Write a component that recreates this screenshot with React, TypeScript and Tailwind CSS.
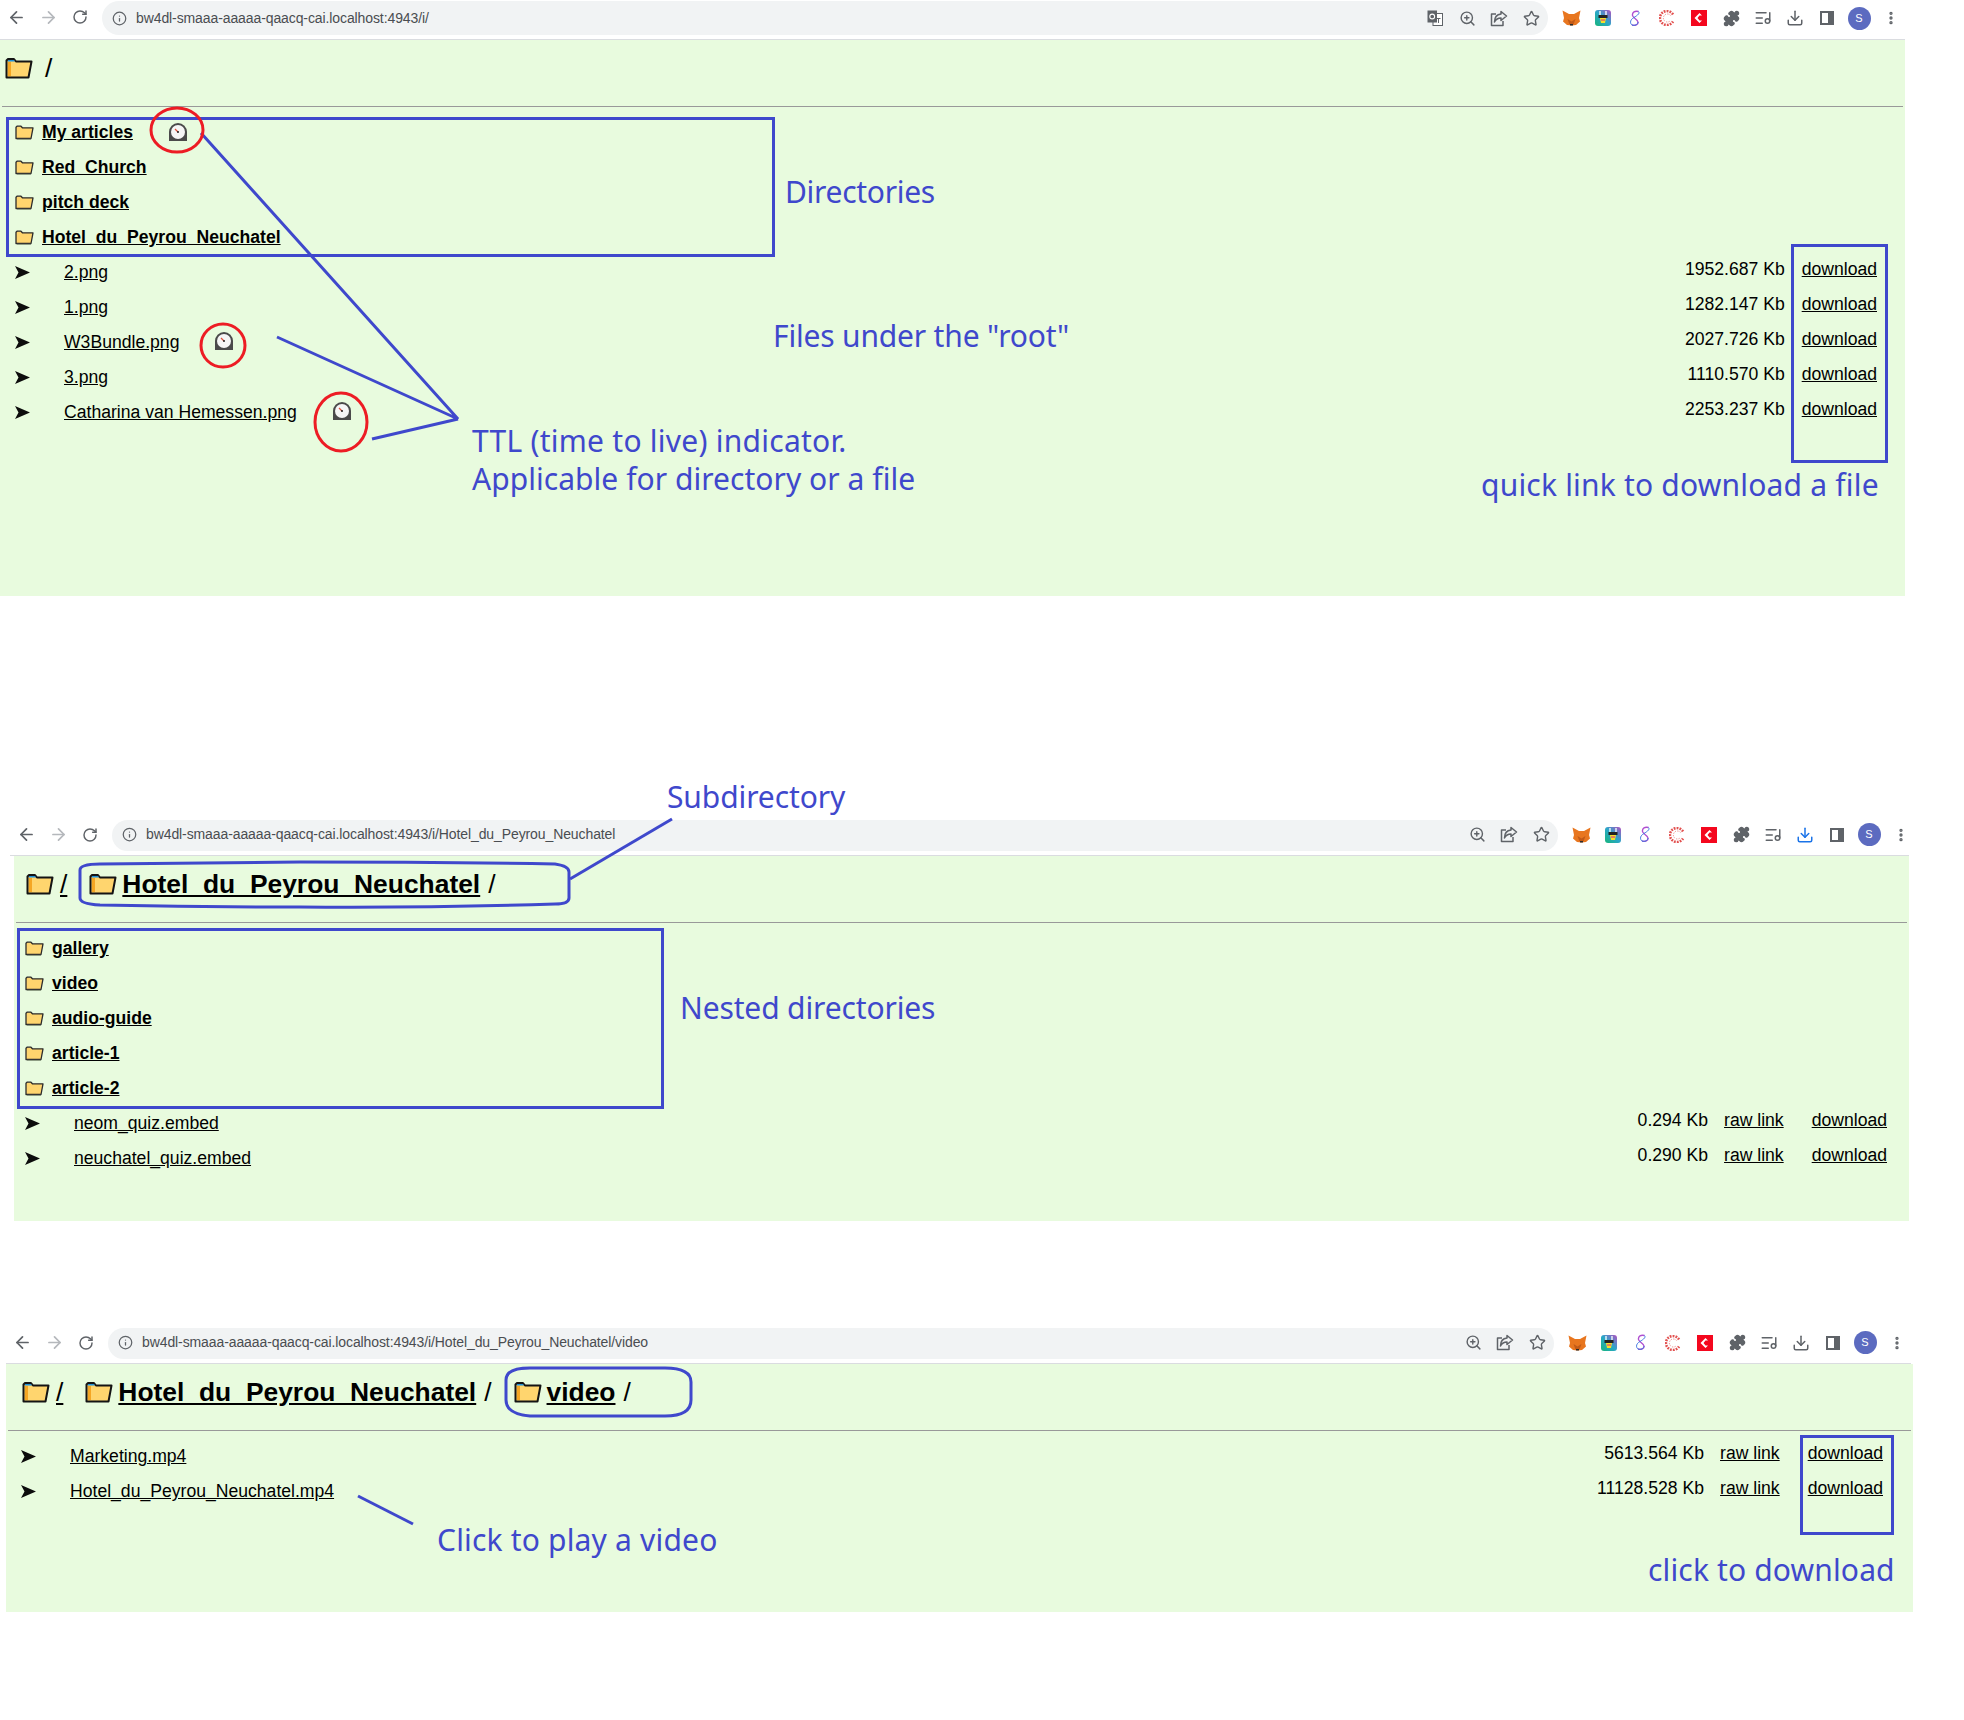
import React from "react";
import { ArrowLeft, ArrowRight, RotateCw, Info, ZoomIn, Star, Puzzle, ListMusic, Download, MoreVertical } from "lucide-react";

const rootFiles = [
  { name: "2.png", size: "1952.687 Kb" },
  { name: "1.png", size: "1282.147 Kb" },
  { name: "W3Bundle.png", size: "2027.726 Kb", ttl: true },
  { name: "3.png", size: "1110.570 Kb" },
  { name: "Catharina van Hemessen.png", size: "2253.237 Kb", ttl: true },
];
const rootDirs = [{ name: "My articles", ttl: true }, { name: "Red_Church" }, { name: "pitch deck" }, { name: "Hotel_du_Peyrou_Neuchatel" }];
const nestedDirs = [{ name: "gallery" }, { name: "video" }, { name: "audio-guide" }, { name: "article-1" }, { name: "article-2" }];

function FolderBig() {
  return (
    <svg width="28" height="22" viewBox="0 0 28 22" className="shrink-0">
      <path d="M1.5 20.5V3.5L3 2h6l2 2.5h15.5L23.5 20.5Z" fill="#ffd56e" stroke="#141414" strokeWidth="2" strokeLinejoin="round" />
      <path d="M3 3h6l1 1.5H3Z" fill="#1f8fd6" />
      <path d="M3 5h3v14H3Z" fill="#f5a623" />
    </svg>
  );
}

function FolderSmall() {
  return (
    <svg width="19" height="15" viewBox="0 0 19 15" className="shrink-0">
      <path d="M1 13.5V2.2L2 1.2h4l1.4 1.6H18L16 13.5Z" fill="#ffd56e" stroke="#2b2b2b" strokeWidth="1.3" strokeLinejoin="round" />
      <path d="M2 14.4h14" stroke="#8a9a80" strokeWidth="1" />
    </svg>
  );
}

function TimerIcon() {
  return (
    <svg width="20" height="20" viewBox="0 0 20 20" className="mb-[2px] shrink-0">
      <path d="M1 19V10a9 9 0 0 1 18 0v9Z" fill="#4a4a4a" />
      <circle cx="10" cy="10" r="7" fill="#f6f6f6" />
      <path d="M7 7l3 3" stroke="#e0503c" strokeWidth="1.2" />
      <circle cx="10" cy="10" r="1" fill="#222" />
    </svg>
  );
}

function Arrow() {
  return (
    <svg width="15" height="13" viewBox="0 0 15 13" className="ml-px shrink-0">
      <path d="M0 0L15 6.5L0 13L3.5 6.5Z" fill="#0c0c0c" />
    </svg>
  );
}

function ShareIcon() {
  return (
    <svg width="18" height="17" viewBox="0 0 18 17" fill="none" stroke="#5f6368" strokeWidth="1.500" strokeLinejoin="round">
      <path d="M6 4H1.500V15.500H13V11" />
      <path d="M11 1.500L16.500 6L11 10.500V8C8 8 6 9 4.500 12C4.500 8 6.500 4.500 11 4Z" />
    </svg>
  );
}

function TranslateIcon() {
  return (
    <svg width="16" height="16" viewBox="0 0 16 16">
      <rect x="6" y="3.500" width="9.500" height="12" fill="#fff" stroke="#5f6368" />
      <rect x="0.500" y="0.500" width="9.500" height="12" fill="#5f6368" />
      <circle cx="5.200" cy="6.500" r="2.400" fill="none" stroke="#fff" strokeWidth="1.100" />
      <path d="M9.500 8.500h4M11.500 8v5" stroke="#5f6368" />
    </svg>
  );
}

function ExtIcons({ blueDownload }: { blueDownload?: boolean }) {
  return (
    <>
      <span className="flex w-8 justify-center">
        <svg width="19" height="16" viewBox="0 0 19 16">
          <path d="M0.500 0.500L7 4h5l6.500-3.500L17 8l1 3.500-4 3.500-4.500 .5-4.500-.5-4-3.500L2 8Z" fill="#e8761f" />
          <path d="M5.500 9l4 2.500L13.500 9l-1.800 5h-4.400Z" fill="#c25a17" />
          <path d="M8 14h3v1.500H8Z" fill="#2c2c2c" />
        </svg>
      </span>
      <span className="flex w-8 justify-center">
        <svg width="16" height="16" viewBox="0 0 16 16">
          <defs>
            <linearGradient id="plug" x1="0" y1="1" x2="1" y2="0">
              <stop offset="0" stopColor="#17b57a" />
              <stop offset="0.5" stopColor="#2aa7c9" />
              <stop offset="1" stopColor="#b24fc0" />
            </linearGradient>
          </defs>
          <rect width="16" height="16" rx="3" fill="url(#plug)" />
          <path d="M5 1v4M11 1v4" stroke="#fff" strokeWidth="1.300" />
          <path d="M3.500 5h9v3h-9Z" fill="#222" />
          <path d="M5 8h6l-1 5H6Z" fill="#f4e02a" />
          <path d="M6 10h4" stroke="#e0407a" strokeWidth="1.200" />
        </svg>
      </span>
      <span className="flex w-8 justify-center">
        <svg width="14" height="17" viewBox="0 0 14 17" fill="none">
          <path d="M10.500 1.500C7 .5 4 2 4.500 5.500c.4 2.500 5 3.500 5.500 6.500.4 2.500-3 4-6 3" stroke="#b04fd0" strokeWidth="1.400" />
          <path d="M10.500 1.500C12.500 4 8 6 4.500 8.500 2 10.500 2 13.500 4 15c3 1 6-.5 6-3" stroke="#3f78e0" strokeWidth="1" />
        </svg>
      </span>
      <span className="flex w-8 justify-center">
        <svg width="16" height="16" viewBox="0 0 16 16" fill="none">
          <path d="M14 4.500A7 7 0 1 0 14 11.500" stroke="#e2504f" strokeWidth="2.600" strokeDasharray="1.800 1.100" />
          <path d="M11.500 5.500A4 4 0 1 0 11.500 10.500" stroke="#ee8a88" strokeWidth="1" strokeDasharray="1.200 1.200" />
        </svg>
      </span>
      <span className="flex w-8 justify-center">
        <svg width="16" height="16" viewBox="0 0 16 16">
          <rect width="16" height="16" fill="#f4071e" />
          <path d="M8.500 3L3.500 8l5 5 2.500-2.500H8.500L6.500 8l2-2.500H11Z" fill="#fff" />
        </svg>
      </span>
      <span className="flex w-8 justify-center">
        <Puzzle size={17} className="fill-[#5f6368] text-[#5f6368]" />
      </span>
      <span className="flex w-8 justify-center">
        <ListMusic size={18} className="text-[#5f6368]" />
      </span>
      <span className="flex w-8 justify-center">
        <Download size={18} className={blueDownload ? "text-[#1a73e8]" : "text-[#5f6368]"} />
      </span>
      <span className="flex w-8 justify-center">
        <span className="flex h-[14px] w-[14px] justify-end border-2 border-[#5f6368]">
          <span className="h-full w-[4px] bg-[#5f6368]" />
        </span>
      </span>
      <span className="flex w-8 justify-center">
        <span className="flex h-[23px] w-[23px] items-center justify-center rounded-full bg-[#5c6bc0] text-[11px] text-white">S</span>
      </span>
      <span className="flex w-8 justify-center">
        <MoreVertical size={16} strokeWidth={3} className="text-[#5f6368]" />
      </span>
    </>
  );
}

function BrowserBar({ url, tall, translate, blueDownload, offset }: { url: string; tall?: boolean; translate?: boolean; blueDownload?: boolean; offset: string }) {
  const icon = "flex w-8 justify-center text-[#5f6368]";
  return (
    <div className={`flex border-b border-[#dadce0] bg-white pb-1 ${offset}`}>
      <div className={`flex w-[102px] shrink-0 items-center ${tall ? "h-[34px]" : "h-[29px]"}`}>
        <span className={icon}><ArrowLeft size={19} strokeWidth={2.2} /></span>
        <span className="flex w-8 justify-center text-[#b5b8bc]"><ArrowRight size={19} strokeWidth={2.2} /></span>
        <span className={icon}><RotateCw size={16} strokeWidth={2.2} /></span>
      </div>
      <div className={`flex w-[1446px] shrink-0 items-center rounded-full bg-[#f1f3f4] pl-[10px] pr-px text-[#5f6368] ${tall ? "mt-px h-[34px]" : "h-[31px] pb-[2px]"}`}>
        <Info size={15} className="shrink-0" />
        <span className="ml-[9px] flex-1 text-[14px] tracking-[-0.1px] text-[#4a4d51]">{url}</span>
        {translate && <span className={icon}><TranslateIcon /></span>}
        <span className={icon}><ZoomIn size={17} /></span>
        <span className={icon}><ShareIcon /></span>
        <span className={icon}><Star size={17} /></span>
      </div>
      <div className={`ml-[7px] flex items-center ${tall ? "mt-px h-[34px]" : "h-[29px]"}`}>
        <ExtIcons blueDownload={blueDownload} />
      </div>
    </div>
  );
}

function Crumb({ name, slashLink }: { name?: string; slashLink?: boolean }) {
  return (
    <div className="flex items-center">
      <FolderBig />
      {name ? (
        <>
          <a className="ml-[5px] font-bold underline">{name}</a>
          <span className="ml-[8px]">/</span>
        </>
      ) : (
        <span className={slashLink ? "ml-[6px] underline" : "ml-[12px]"}>/</span>
      )}
    </div>
  );
}

function DirRow({ name, ttl, pad }: { name: string; ttl?: boolean; pad: string }) {
  return (
    <div className={`flex h-[35px] items-center ${pad}`}>
      <span className="flex w-[28px] shrink-0 pl-px"><FolderSmall /></span>
      <a className="font-bold underline">{name}</a>
      {ttl && <span className="ml-[35px]"><TimerIcon /></span>}
    </div>
  );
}

function FileRow({ name, size, ttl, raw, pad, right }: { name: string; size: string; ttl?: boolean; raw?: boolean; pad: string; right: string }) {
  return (
    <div className={`flex h-[35px] items-center justify-between ${pad} ${right}`}>
      <div className="flex items-center">
        <span className="flex w-[50px] shrink-0"><Arrow /></span>
        <a className="underline">{name}</a>
        {ttl && <span className="ml-[35px]"><TimerIcon /></span>}
      </div>
      <div className="flex pb-[7px]">
        <span>{size}</span>
        {raw && <a className="ml-[16px] underline">raw link</a>}
        <a className={raw ? "ml-[28px] underline" : "ml-[17px] underline"}>download</a>
      </div>
    </div>
  );
}

function Green({ className, titlePad, crumbs, children }: { className: string; titlePad: string; crumbs: React.ReactNode; children: React.ReactNode }) {
  return (
    <div className={`bg-[#e8fbde] text-[17.6px] text-black ${className}`}>
      <div className={`flex h-[66px] items-start gap-[22px] pt-[17px] text-[26.4px] leading-[22px] ${titlePad}`}>{crumbs}</div>
      <div className="mx-[2px] h-px bg-[#999999]" />
      <div className="pt-2">{children}</div>
    </div>
  );
}

function Label({ className, children }: { className: string; children: React.ReactNode }) {
  return <div className={`absolute -translate-y-1/2 whitespace-nowrap text-[30px] leading-none text-[#3f48cc] ${className}`} style={{ fontFamily: '"Noto Sans", sans-serif' }}>{children}</div>;
}

export default function App() {
  return (
    <div className="relative h-[1720px] w-[1964px] overflow-hidden bg-white" style={{ fontFamily: '"Liberation Sans", Arial, sans-serif' }}>
      {/* top window */}
      <BrowserBar url="bw4dl-smaaa-aaaaa-qaacq-cai.localhost:4943/i/" tall translate offset="w-[1905px]" />
      <Green className="h-[556px] w-[1905px]" titlePad="pl-[5px]" crumbs={<Crumb />}>
        {rootDirs.map((d) => <DirRow key={d.name} name={d.name} ttl={d.ttl} pad="pl-[14px]" />)}
        {rootFiles.map((f) => <FileRow key={f.name} {...f} pad="pl-[14px]" right="pr-[28px]" />)}
      </Green>

      {/* subdirectory window */}
      <div className="mt-[224px]">
        <BrowserBar url="bw4dl-smaaa-aaaaa-qaacq-cai.localhost:4943/i/Hotel_du_Peyrou_Neuchatel" blueDownload offset="ml-[10px] w-[1899px]" />
        <Green className="ml-[14px] h-[365px] w-[1895px]" titlePad="pl-[12px]" crumbs={<><Crumb slashLink /><Crumb name="Hotel_du_Peyrou_Neuchatel" /></>}>
          {nestedDirs.map((d) => <DirRow key={d.name} name={d.name} pad="pl-[10px]" />)}
          <FileRow name="neom_quiz.embed" size="0.294 Kb" raw pad="pl-[10px]" right="pr-[22px]" />
          <FileRow name="neuchatel_quiz.embed" size="0.290 Kb" raw pad="pl-[10px]" right="pr-[22px]" />
        </Green>
      </div>

      {/* video window */}
      <div className="mt-[107px]">
        <BrowserBar url="bw4dl-smaaa-aaaaa-qaacq-cai.localhost:4943/i/Hotel_du_Peyrou_Neuchatel/video" offset="ml-[6px] w-[1905px]" />
        <Green className="ml-[6px] h-[248px] w-[1907px]" titlePad="pl-[16px]" crumbs={<><Crumb slashLink /><Crumb name="Hotel_du_Peyrou_Neuchatel" /><Crumb name="video" /></>}>
          <FileRow name="Marketing.mp4" size="5613.564 Kb" raw pad="pl-[14px]" right="pr-[30px]" />
          <FileRow name="Hotel_du_Peyrou_Neuchatel.mp4" size="11128.528 Kb" raw pad="pl-[14px]" right="pr-[30px]" />
        </Green>
      </div>

      {/* hand drawn annotations on top of the screenshots */}
      <svg width="1964" height="1720" className="pointer-events-none absolute left-0 top-0" fill="none">
        <g stroke="#3f48cc" strokeWidth="3">
          <rect x="7.5" y="118.500" width="766" height="137" />
          <rect x="1792.500" y="245.500" width="94" height="216" />
          <rect x="18.500" y="929.500" width="644" height="178" />
          <rect x="1801.500" y="1436.500" width="91" height="97" />
          <path d="M201 133L458 419L277 337M458 419L372 439" />
          <path d="M672 819L570 879" />
          <path d="M358 1496L413 1524" />
          <path d="M80 870Q80 864 100 864Q200 863 300 862Q430 862 555 864Q569 866 569 872V898Q569 904 555 904Q430 908 300 907Q200 907 100 905Q80 904 80 898Z" />
          <path d="M506 1380Q506 1368 530 1368H665Q691 1368 691 1382V1400Q691 1416 665 1416H530Q506 1414 506 1400Z" />
        </g>
        <g stroke="#ed1c24" strokeWidth="3">
          <ellipse cx="177" cy="130" rx="26" ry="22" />
          <ellipse cx="223" cy="345.500" rx="22" ry="21.500" />
          <ellipse cx="341" cy="422" rx="26" ry="29" />
        </g>
      </svg>
      <Label className="left-[785px] top-[192px] tracking-[-0.3px]">Directories</Label>
      <Label className="left-[773px] top-[336px] tracking-[-0.18px]">Files under the "root"</Label>
      <Label className="left-[472px] top-[441px] tracking-[0.25px]">TTL (time to live) indicator.</Label>
      <Label className="left-[472px] top-[479px] tracking-[0.04px]">Applicable for directory or a file</Label>
      <Label className="left-[1481px] top-[485px] tracking-[0.2px]">quick link to download a file</Label>
      <Label className="left-[667px] top-[797px] tracking-[-0.1px]">Subdirectory</Label>
      <Label className="left-[680px] top-[1008px] tracking-[-0.14px]">Nested directories</Label>
      <Label className="left-[437px] top-[1540px] tracking-[0.18px]">Click to play a video</Label>
      <Label className="left-[1648px] top-[1570px] tracking-[0.15px]">click to download</Label>
    </div>
  );
}
